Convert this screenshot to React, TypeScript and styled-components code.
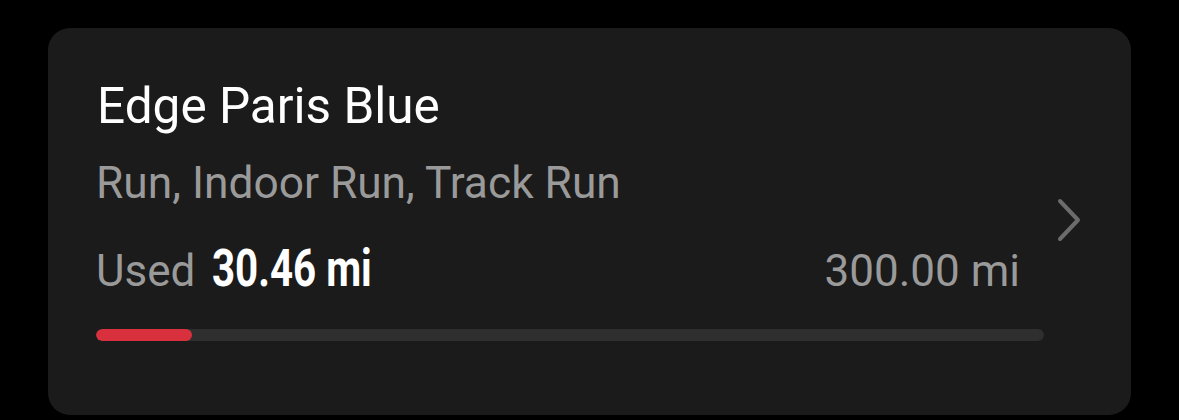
import React from "react";
import styled, { createGlobalStyle } from "styled-components";

const Global = createGlobalStyle`
  html, body {
    margin: 0;
    padding: 0;
    background: #000;
  }
  body {
    font-family: Roboto, "Liberation Sans", sans-serif;
    -webkit-font-smoothing: antialiased;
  }
`;

const Page = styled.div`
  padding: 28px 48px 6px 48px;
`;

const Card = styled.div`
  display: flex;
  align-items: center;
  gap: 13px;
  background: #1b1b1b;
  border-radius: 22px;
  padding: 49px 50px 74px 48px;
`;

const Content = styled.div`
  flex: 1;
  display: flex;
  flex-direction: column;
`;

const Title = styled.div`
  color: #fff;
  font-size: 49.5px;
  line-height: 58px;
  font-weight: 400;
  padding-left: 1px;
`;

const Subtitle = styled.div`
  margin-top: 23px;
  color: #9a9a9a;
  font-size: 44.3px;
  line-height: 50px;
`;

const StatRow = styled.div`
  margin-top: 31px;
  display: flex;
  align-items: baseline;
  justify-content: space-between;
  height: 60px;
  line-height: 60px;
  padding-right: 24px;
`;

const Used = styled.div`
  display: flex;
  align-items: baseline;
  gap: 17px;
`;

const Muted = styled.span`
  color: #9a9a9a;
  font-size: 44px;
`;

const Value = styled.span`
  display: inline-block;
  color: #fff;
  font-size: 52px;
  font-weight: 700;
  transform: scaleX(0.775);
  transform-origin: left center;
`;

const Track = styled.div`
  margin-top: 30px;
  height: 12px;
  border-radius: 6px;
  background: #2f2f2f;
  overflow: hidden;
`;

const Fill = styled.div`
  height: 100%;
  border-radius: 6px;
  background: #d8303d;
`;

const Chevron = styled.svg`
  flex: none;
  align-self: center;
  width: 24px;
  height: 44px;
  margin-top: 22px;
`;

export default function App() {
  const used = 30.46;
  const total = 300;
  const pct = (used / total) * 100;
  return (
    <>
      <Global />
      <Page>
        <Card>
          <Content>
            <Title>Edge Paris Blue</Title>
            <Subtitle>Run, Indoor Run, Track Run</Subtitle>
            <StatRow>
              <Used>
                <Muted>Used</Muted>
                <Value>30.46 mi</Value>
              </Used>
              <Muted>300.00 mi</Muted>
            </StatRow>
            <Track>
              <Fill style={{ width: `${pct}%` }} />
            </Track>
          </Content>
          <Chevron viewBox="0 0 24 44" fill="none">
            <path
              d="M3 3 L21 22 L3 41"
              stroke="#6c6c6c"
              strokeWidth="4"
              strokeLinecap="round"
              strokeLinejoin="round"
            />
          </Chevron>
        </Card>
      </Page>
    </>
  );
}
